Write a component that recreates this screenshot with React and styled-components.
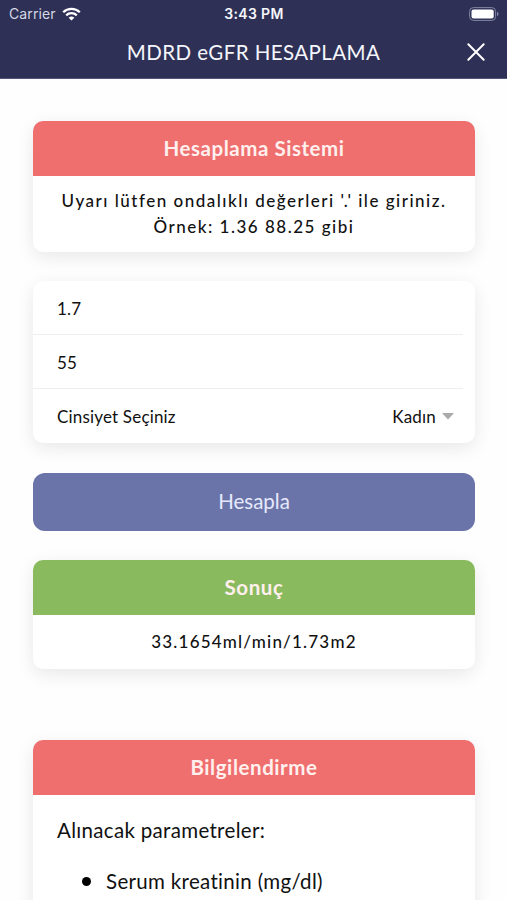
import React from 'react'
import styled, { createGlobalStyle } from 'styled-components'

const GlobalStyle = createGlobalStyle`
	* {
		box-sizing: border-box;
	}

	html,
	body {
		margin: 0;
		height: 900px;
		overflow: hidden;
		background: #fff;
	}
`

const Screen = styled.div`
	width: 100%;
	height: 900px;
	overflow: hidden;
	background: #fefefe;
	color: #111;
	font-family: Lato, sans-serif;
	font-variant-ligatures: none;
`

const Header = styled.header`
	height: 79px;
	background: #2e3056;
	color: #f5f6fc;
	border-bottom: 1px solid #55577a;
`

const StatusBar = styled.div`
	height: 27px;
	padding: 0 8px 0 9px;
	display: grid;
	grid-template-columns: 1fr auto 1fr;
	align-items: center;
	font-family: Inter, sans-serif;
	font-size: 14px;
	line-height: 27px;
`

const Carrier = styled.div`
	display: flex;
	align-items: center;
	gap: 6px;
	color: #d5d7e5;
	letter-spacing: 0.1px;
`

const Clock = styled.div`
	font-size: 14px;
	font-weight: 600;
	letter-spacing: 0.35px;
`

const Battery = styled.div`
	display: flex;
	justify-content: flex-end;
`

const NavBar = styled.div`
	height: 50px;
	padding: 0 21px;
	display: grid;
	grid-template-columns: 20px 1fr 20px;
	align-items: center;
`

const Title = styled.h1`
	grid-column: 2;
	margin: 0;
	text-align: center;
	font-size: 20.5px;
	font-weight: 400;
	line-height: 26px;
	letter-spacing: 0.42px;
	white-space: nowrap;
`

const CloseButton = styled.button`
	display: flex;
	padding: 0;
	border: 0;
	background: none;
	color: inherit;
`

const Content = styled.main`
	padding: 42px 32px 0 33px;
	display: flex;
	flex-direction: column;
`

const Card = styled.section`
	flex: none;
	height: ${(props) => props.$height}px;
	margin-bottom: ${(props) => props.$gap || 0}px;
	border-radius: 10px;
	background: #fff;
	box-shadow: 0 5px 18px rgba(0, 0, 0, 0.09);
	overflow: hidden;
`

const CardTitle = styled.h2`
	height: 55px;
	margin: 0;
	background: ${(props) => (props.$success ? '#8aba5e' : '#ef6e6e')};
	color: #fff0ee;
	text-align: center;
	font-size: 20.5px;
	font-weight: 700;
	line-height: 54px;
	letter-spacing: 0.55px;
`

const CardText = styled.p`
	margin: 0;
	padding-top: ${(props) => (props.$result ? 14 : 12)}px;
	text-align: center;
	font-size: 17px;
	font-weight: 500;
	line-height: 25.5px;
	letter-spacing: ${(props) => (props.$result ? 1.2 : 1.5)}px;
	white-space: nowrap;
`

const Field = styled.div`
	height: 54px;
	margin-right: 12px;
	padding: 1px 9px 0 24px;
	display: flex;
	align-items: center;
	justify-content: space-between;
	border-bottom: ${(props) => (props.$last ? '0' : '1px solid #eee')};
	font-size: 17px;
	letter-spacing: 0.18px;
`

const Select = styled.div`
	display: flex;
	align-items: center;
	gap: 6px;
`

const CalculateButton = styled.button`
	flex: none;
	height: 58px;
	margin: 0 0 29px;
	padding: 0 0 2px;
	border: 0;
	border-radius: 12px;
	background: #6a74a9;
	color: #e6e9fb;
	font-family: inherit;
	font-size: 20.5px;
	line-height: 56px;
`

const Info = styled.div`
	padding: 21px 24px;
	font-size: 20.5px;
	line-height: 28px;
	letter-spacing: 0.32px;
`

const InfoText = styled.p`
	margin: 0 0 23px;
`

const InfoList = styled.ul`
	margin: 0;
	padding: 0;
	list-style: none;
`

const InfoItem = styled.li`
	padding-left: 25px;
	display: flex;
	align-items: center;
	gap: 15px;

	&::before {
		content: '';
		width: 9px;
		height: 9px;
		border-radius: 50%;
		background: #000;
	}
`

function WifiIcon() {
	return (
		<svg width="19" height="14" viewBox="0 0 19 14" fill="none" stroke="#fff" strokeWidth="2.3">
			<path d="M1.2 5.2C5.8.7 13.2.7 17.8 5.2" />
			<path d="M4.2 8.3C7.1 5.5 11.9 5.5 14.8 8.3" />
			<path d="M9.5 13.6 6.6 10.7Q9.5 8.3 12.4 10.7Z" fill="#fff" stroke="none" />
		</svg>
	)
}

function BatteryIcon() {
	return (
		<svg width="30" height="14" viewBox="0 0 30 14">
			<rect x=".6" y=".6" width="26" height="12.8" rx="3.8" fill="none" stroke="#8385a2" />
			<rect x="2.5" y="2.5" width="22.2" height="9" rx="2" fill="#fff" />
			<path d="M28 4.8Q29.6 5.4 29.6 7T28 9.2Z" fill="#8385a2" />
		</svg>
	)
}

function CloseIcon() {
	return (
		<svg width="20" height="20" viewBox="0 0 20 20" stroke="#fff" strokeWidth="2" strokeLinecap="round">
			<path d="M2.3 2.3 17.7 17.7M17.7 2.3 2.3 17.7" />
		</svg>
	)
}

function App() {
	return (
		<Screen>
			<GlobalStyle />
			<Header>
				<StatusBar>
					<Carrier>
						Carrier <WifiIcon />
					</Carrier>
					<Clock>3:43 PM</Clock>
					<Battery>
						<BatteryIcon />
					</Battery>
				</StatusBar>
				<NavBar>
					<Title>MDRD eGFR HESAPLAMA</Title>
					<CloseButton aria-label="Kapat">
						<CloseIcon />
					</CloseButton>
				</NavBar>
			</Header>
			<Content>
				<Card $height={131} $gap={29}>
					<CardTitle>Hesaplama Sistemi</CardTitle>
					<CardText>
						Uyarı lütfen ondalıklı değerleri '.' ile giriniz.
						<br />
						Örnek: 1.36 88.25 gibi
					</CardText>
				</Card>
				<Card $height={162} $gap={30}>
					<Field>1.7</Field>
					<Field>55</Field>
					<Field $last>
						Cinsiyet Seçiniz
						<Select>
							Kadın
							<svg width="12" height="7" viewBox="0 0 12 7">
								<path d="M0 0H12L6 6.5Z" fill="#aaa" />
							</svg>
						</Select>
					</Field>
				</Card>
				<CalculateButton>Hesapla</CalculateButton>
				<Card $height={109} $gap={71}>
					<CardTitle $success>Sonuç</CardTitle>
					<CardText $result>33.1654ml/min/1.73m2</CardText>
				</Card>
				<Card $height={220}>
					<CardTitle>Bilgilendirme</CardTitle>
					<Info>
						<InfoText>Alınacak parametreler:</InfoText>
						<InfoList>
							<InfoItem>Serum kreatinin (mg/dl)</InfoItem>
						</InfoList>
					</Info>
				</Card>
			</Content>
		</Screen>
	)
}

export default App
